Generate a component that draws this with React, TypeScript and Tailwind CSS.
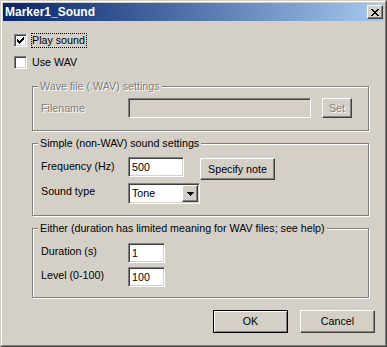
import React from 'react';

const sunken =
  'border border-t-[#808080] border-l-[#808080] border-r-white border-b-white shadow-[inset_1px_1px_0_#404040,inset_-1px_-1px_0_#d4d0c8]';
const raised =
  'border border-t-white border-l-white border-r-[#404040] border-b-[#404040] shadow-[inset_-1px_-1px_0_#808080]';
const grayText = 'text-[#808080] [text-shadow:1px_1px_0_white]';

// pixel glyphs, drawn as little rect runs [x, y, w]
const checkPixels = [
  [6, 0, 1], [5, 1, 2], [0, 2, 1], [4, 2, 3], [0, 3, 2], [3, 3, 3], [0, 4, 5], [1, 5, 3], [2, 6, 1],
];
const closePixels = [
  [0, 0, 2], [6, 0, 2], [1, 1, 2], [5, 1, 2], [2, 2, 4], [3, 3, 2], [2, 4, 4], [1, 5, 2], [5, 5, 2], [0, 6, 2], [6, 6, 2],
];
const arrowPixels = [[0, 0, 7], [1, 1, 5], [2, 2, 3], [3, 3, 1]];

function Pixels({ data, w, h }: { data: number[][]; w: number; h: number }) {
  return (
    <svg width={w} height={h} viewBox={`0 0 ${w} ${h}`} shapeRendering="crispEdges">
      {data.map(([x, y, len], i) => (
        <rect key={i} x={x} y={y} width={len} height={1} fill="black" />
      ))}
    </svg>
  );
}

function Checkbox({ checked }: { checked?: boolean }) {
  return (
    <span className={`flex h-[13px] w-[13px] shrink-0 items-center justify-center bg-white ${sunken}`}>
      {checked && <Pixels data={checkPixels} w={7} h={7} />}
    </span>
  );
}

function Field({ value, width, disabled }: { value?: string; width: string; disabled?: boolean }) {
  return (
    <div className={`flex h-[20px] ${width} items-center pl-[3px] ${disabled ? 'bg-[#d4d0c8]' : 'bg-white'} ${sunken}`}>
      {value}
    </div>
  );
}

function Group({
  title,
  disabled,
  className,
  children,
}: {
  title: string;
  disabled?: boolean;
  className?: string;
  children: React.ReactNode;
}) {
  return (
    <fieldset
      className={`ml-[18px] w-[337px] border border-[#808080] shadow-[inset_1px_1px_0_white,1px_1px_0_white] ${className}`}
    >
      <legend className={`ml-[5px] bg-[#d4d0c8] px-[2px] leading-[13px] ${disabled ? grayText : ''}`}>{title}</legend>
      {children}
    </fieldset>
  );
}

export default function App() {
  return (
    <div className="h-[347px] w-[387px] font-['Liberation_Sans',Arial,sans-serif] text-[10.7px] leading-[13px] text-black">
      <div className="h-full border border-t-[#d4d0c8] border-l-[#d4d0c8] border-r-[#404040] border-b-[#404040]">
        <div className="flex h-full flex-col border border-t-white border-l-white border-r-[#808080] border-b-[#808080] bg-[#d4d0c8] p-px">
          <div className="flex h-[18px] items-center justify-between bg-linear-to-r from-[#0a246a] to-[#a6caf0] pl-[2px] pr-[1px]">
            <span className="text-[12px] font-bold leading-[14px] text-white">Marker1_Sound</span>
            <div className={`flex h-[14px] w-[16px] items-center justify-center bg-[#d4d0c8] ${raised}`}>
              <Pixels data={closePixels} w={8} h={7} />
            </div>
          </div>

          <div className="pl-[11px] pt-[11px]">
            <div className="flex h-[16px] items-center">
              <Checkbox checked />
              <span className="ml-[4px] border border-dotted border-black pr-px">Play sound</span>
            </div>
            <div className="mt-[6px] flex h-[16px] items-center">
              <Checkbox />
              <span className="ml-[5px]">Use WAV</span>
            </div>

            <Group title="Wave file (.WAV) settings" disabled className="mt-[10px] pb-[12px] pt-[5px]">
              <div className="flex items-start">
                <span className={`w-[95px] pl-[8px] pt-[4px] ${grayText}`}>Filename</span>
                <Field width="w-[183px]" disabled />
                <div className={`ml-[11px] flex h-[20px] w-[30px] items-center justify-center ${grayText} ${raised}`}>
                  Set
                </div>
              </div>
            </Group>

            <Group title="Simple (non-WAV) sound settings" className="mt-[6px] pb-[11px] pt-[7px]">
              <div className="flex items-start">
                <span className="w-[95px] pl-[8px] pt-[3px]">Frequency (Hz)</span>
                <Field value="500" width="w-[56px]" />
                <div className={`ml-[16px] mt-px flex h-[22px] w-[75px] items-center justify-center ${raised}`}>
                  Specify note
                </div>
              </div>
              <div className="mt-[3px] flex items-start">
                <span className="w-[95px] pl-[8px] pt-[2px]">Sound type</span>
                <div className={`flex h-[21px] w-[72px] bg-white ${sunken}`}>
                  <span className="flex flex-1 items-center pl-[3px]">Tone</span>
                  <span className={`my-px mr-px flex w-[16px] items-center justify-center bg-[#d4d0c8] ${raised}`}>
                    <Pixels data={arrowPixels} w={7} h={4} />
                  </span>
                </div>
              </div>
            </Group>

            <Group
              title="Either (duration has limited meaning for WAV files; see help)"
              className="mt-[6px] pb-[10px] pt-[8px]"
            >
              <div className="flex items-start">
                <span className="w-[95px] pl-[8px] pt-[2px]">Duration (s)</span>
                <Field value="1" width="w-[37px]" />
              </div>
              <div className="mt-[4px] flex items-start">
                <span className="w-[95px] pl-[8px] pt-[2px]">Level (0-100)</span>
                <Field value="100" width="w-[37px]" />
              </div>
            </Group>

            <div className="mt-[12px] flex justify-end gap-[12px] pr-[9px]">
              <div className="flex h-[23px] w-[75px] items-center justify-center border border-black shadow-[inset_1px_1px_0_white,inset_-1px_-1px_0_#808080]">
                OK
              </div>
              <div className={`flex h-[23px] w-[75px] items-center justify-center ${raised}`}>Cancel</div>
            </div>
          </div>
        </div>
      </div>
    </div>
  );
}
